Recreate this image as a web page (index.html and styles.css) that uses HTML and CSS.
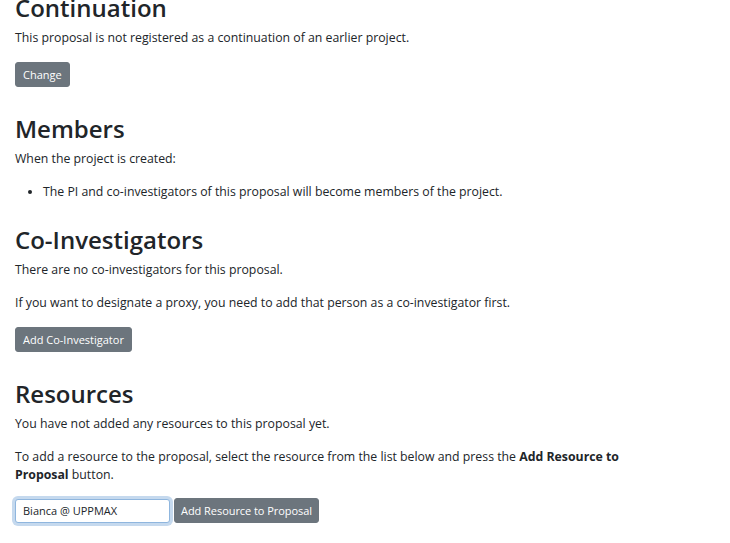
FILE: index.html
```html
<!DOCTYPE html>
<html lang="en">
<head>
<meta charset="utf-8">
<title>Proposal</title>
<link rel="stylesheet" href="styles.css">
</head>
<body>
<main class="page">
  <section class="block">
    <h2 class="heading">Continuation</h2>
    <p class="text">This proposal is not registered as a continuation of an earlier project.</p>
    <div class="actions">
      <button class="btn" type="button">Change</button>
    </div>
  </section>
  <section class="block">
    <h2 class="heading">Members</h2>
    <p class="text">When the project is created:</p>
    <ul class="list">
      <li>The PI and co-investigators of this proposal will become members of the project.</li>
    </ul>
  </section>
  <section class="block">
    <h2 class="heading">Co-Investigators</h2>
    <p class="text">There are no co-investigators for this proposal.</p>
    <p class="text">If you want to designate a proxy, you need to add that person as a co-investigator first.</p>
    <div class="actions">
      <button class="btn" type="button">Add Co-Investigator</button>
    </div>
  </section>
  <section class="block">
    <h2 class="heading">Resources</h2>
    <p class="text">You have not added any resources to this proposal yet.</p>
    <p class="text">To add a resource to the proposal, select the resource from the list below and press the <strong>Add Resource to Proposal</strong> button.</p>
    <div class="actions form-row">
      <div class="select">Bianca @ UPPMAX</div>
      <button class="btn btn-wide" type="button">Add Resource to Proposal</button>
    </div>
  </section>
</main>
</body>
</html>
```
FILE: styles.css
```css
html, body {
  margin: 0;
  padding: 0;
  background: #ffffff;
}
body {
  font-family: "Open Sans", "Noto Sans", "Liberation Sans", sans-serif;
  font-size: 12.3px;
  line-height: 18px;
  color: #212529;
}
.page {
  max-width: 620px;
  padding: 0 15px;
  margin-top: -7px;
}
.block {
  margin: 0;
}
.heading {
  font-size: 24px;
  font-weight: 600;
  line-height: 29px;
  margin: 0 0 7px 0;
  color: #212529;
}
.text {
  margin: 0 0 15px 0;
}
.list {
  margin: 0 0 24px 0;
  padding-left: 28px;
}
.actions {
  display: flex;
  align-items: center;
  gap: 4px;
  margin-bottom: 27px;
}
.btn {
  font-family: inherit;
  font-size: 11px;
  line-height: 17px;
  color: #ffffff;
  background: #6c757d;
  border: 1px solid #6c757d;
  border-radius: 3px;
  padding: 3px 7px;
  cursor: pointer;
}
.btn-wide {
  padding: 3px 6px;
  letter-spacing: -0.05px;
}
.form-row {
  margin-top: -1px;
}
.select {
  box-sizing: border-box;
  width: 155px;
  height: 24px;
  padding: 3px 7px;
  font-size: 11px;
  line-height: 16px;
  border: 1px solid #8fb6de;
  border-radius: 3px;
  box-shadow: 0 0 0 3px #c5d9ee;
  background: #fff;
}
```
